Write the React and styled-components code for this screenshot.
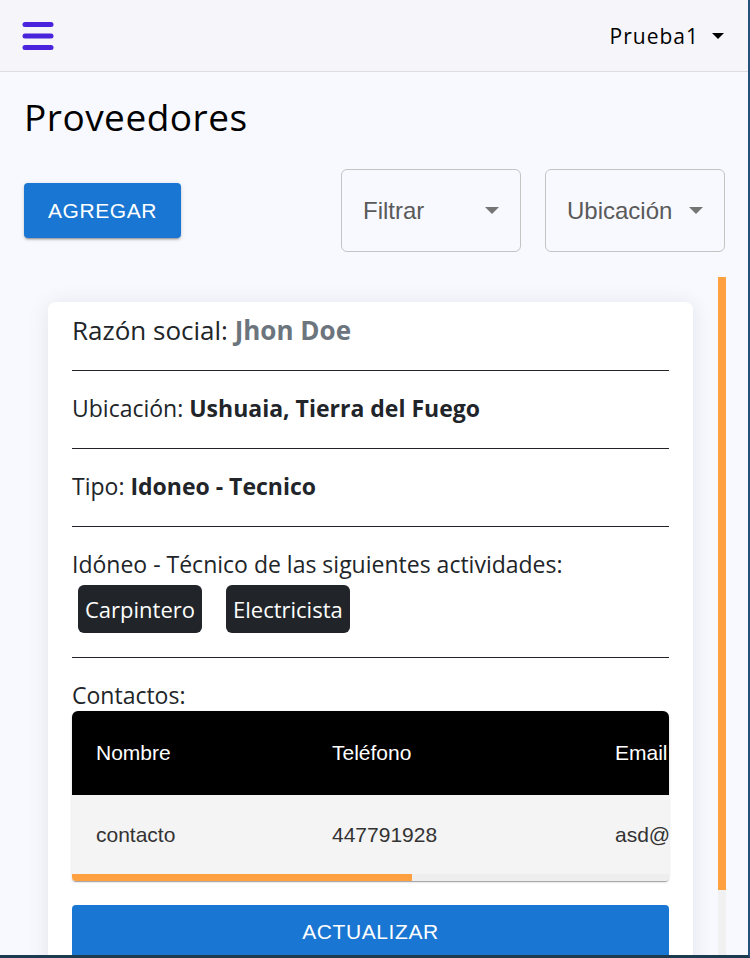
import React from 'react';
import styled, { createGlobalStyle } from 'styled-components';

const contactos = [
  { nombre: 'contacto', telefono: '447791928', email: 'asd@asd.com' }
];

const actividades = ['Carpintero', 'Electricista'];

const App = () => {
  return (
    <>
      <GlobalStyle />
      <Header>
        <MenuButton aria-label="menu">
          <svg width="32" height="30" viewBox="0 0 32 30">
            <g stroke="#4a23dc" strokeWidth="5" strokeLinecap="round">
              <line x1="3" y1="3.5" x2="29" y2="3.5" />
              <line x1="3" y1="15" x2="29" y2="15" />
              <line x1="3" y1="26.5" x2="29" y2="26.5" />
            </g>
          </svg>
        </MenuButton>
        <UserMenu>
          Prueba1
          <Caret />
        </UserMenu>
      </Header>

      <Main>
        <Title>Proveedores</Title>

        <Toolbar>
          <AddButton>Agregar</AddButton>
          <Selects>
            <SelectBox>
              <span>Filtrar</span>
              <SelectArrow />
            </SelectBox>
            <SelectBox>
              <span>Ubicación</span>
              <SelectArrow />
            </SelectBox>
          </Selects>
        </Toolbar>

        <ScrollArea>
          <ScrollContent>
            <Card>
              <Field $big>
                Razón social: <Muted>Jhon Doe</Muted>
              </Field>
              <Divider />
              <Field>
                Ubicación: <strong>Ushuaia, Tierra del Fuego</strong>
              </Field>
              <Divider />
              <Field>
                Tipo: <strong>Idoneo - Tecnico</strong>
              </Field>
              <Divider />
              <Field>Idóneo - Técnico de las siguientes actividades:</Field>
              <Badges>
                {actividades.map((a) => (
                  <Badge key={a}>{a}</Badge>
                ))}
              </Badges>
              <Divider />
              <Label>Contactos:</Label>
              <TablePaper>
                <TableClip>
                  <Table>
                    <thead>
                      <tr>
                        <Th $w={236}>Nombre</Th>
                        <Th $w={283}>Teléfono</Th>
                        <Th>Email</Th>
                      </tr>
                    </thead>
                    <tbody>
                      {contactos.map((c) => (
                        <tr key={c.telefono}>
                          <Td>{c.nombre}</Td>
                          <Td>{c.telefono}</Td>
                          <Td>{c.email}</Td>
                        </tr>
                      ))}
                    </tbody>
                  </Table>
                </TableClip>
                <HTrack>
                  <HThumb />
                </HTrack>
              </TablePaper>
              <UpdateButton>Actualizar</UpdateButton>
            </Card>
          </ScrollContent>
          <VTrack>
            <VThumb />
          </VTrack>
        </ScrollArea>
      </Main>

      <WindowFrame />
    </>
  );
};

const GlobalStyle = createGlobalStyle`
  * {
    box-sizing: border-box;
  }

  body {
    margin: 0;
    background: #f8f9fe;
    font-family: "Open Sans", "Noto Sans", sans-serif;
    color: #212529;
    overflow: hidden;
  }
`;

const Header = styled.header`
  height: 72px;
  display: flex;
  align-items: center;
  justify-content: space-between;
  padding: 0 26px 0 22px;
  background: #f6f5fa;
  border-bottom: 1px solid #dcdce2;
`;

const MenuButton = styled.button`
  display: flex;
  padding: 0;
  border: 0;
  background: none;
`;

const UserMenu = styled.div`
  display: flex;
  align-items: center;
  font-size: 21px;
  letter-spacing: 1px;
  color: #000;
`;

const Caret = styled.span`
  margin-left: 13px;
  border-top: 6px solid #000;
  border-left: 6px solid transparent;
  border-right: 6px solid transparent;
`;

const Main = styled.main`
  padding: 0 24px 0 24px;
`;

const Title = styled.h1`
  margin: 23px 0 0;
  font-size: 37px;
  font-weight: 400;
  line-height: 43px;
  letter-spacing: 0.5px;
  color: #000;
`;

const Toolbar = styled.div`
  display: flex;
  align-items: center;
  justify-content: space-between;
  margin-top: 31px;
`;

const AddButton = styled.button`
  width: 157px;
  height: 55px;
  border: 0;
  border-radius: 4px;
  background: #1976d2;
  color: #fff;
  font-family: "Liberation Sans", Arial, sans-serif;
  font-size: 21px;
  letter-spacing: 0.6px;
  text-transform: uppercase;
  box-shadow: 0 3px 1px -2px rgba(0, 0, 0, 0.2), 0 2px 2px rgba(0, 0, 0, 0.14),
    0 1px 5px rgba(0, 0, 0, 0.12);
`;

const Selects = styled.div`
  display: flex;
  gap: 24px;
  margin-right: 1px;
`;

const SelectBox = styled.div`
  width: 180px;
  height: 83px;
  display: flex;
  align-items: center;
  justify-content: space-between;
  padding: 0 21px 0 21px;
  border: 1px solid #c4c4c4;
  border-radius: 6px;
  font-family: "Liberation Sans", Arial, sans-serif;
  font-size: 24px;
  color: #5a5a5a;
`;

const SelectArrow = styled.span`
  border-top: 7px solid #757575;
  border-left: 7px solid transparent;
  border-right: 7px solid transparent;
`;

const ScrollArea = styled.div`
  height: 681px;
  margin-top: 25px;
  display: flex;
`;

const ScrollContent = styled.div`
  flex: 1;
  overflow: hidden;
  padding: 25px 25px 0 24px;
`;

const VTrack = styled.div`
  width: 8px;
  flex-shrink: 0;
  background: #f1f1f1;
`;

const VThumb = styled.div`
  height: 613px;
  background: #ffa041;
`;

const Card = styled.div`
  padding: 12px 24px 24px;
  background: #fff;
  border-radius: 8px;
  box-shadow: 0 2px 22px rgba(0, 0, 0, 0.09);
`;

const Field = styled.p`
  margin: 0;
  padding-bottom: 4px;
  font-size: ${(p) => (p.$big ? '26px' : '23px')};
  line-height: 32px;

  strong {
    font-weight: 700;
  }
`;

const Muted = styled.strong`
  color: #6c757d;
`;

const Divider = styled.hr`
  margin: 20px 0 21px;
  border: 0;
  border-top: 1px solid #212529;
`;

const Badges = styled.div`
  display: flex;
  gap: 24px;
  padding: 1px 0 4px 6px;
`;

const Badge = styled.span`
  height: 48px;
  display: flex;
  align-items: center;
  padding: 0 7px;
  border-radius: 6px;
  background: #212529;
  color: #fff;
  font-size: 22px;
`;

const Label = styled.div`
  font-size: 23px;
  line-height: 32px;
`;

const TablePaper = styled.div`
  border-radius: 6px 6px 4px 4px;
  overflow: hidden;
  background: #f4f4f4;
  box-shadow: 0 2px 1px -1px rgba(0, 0, 0, 0.2), 0 1px 1px rgba(0, 0, 0, 0.14),
    0 1px 3px rgba(0, 0, 0, 0.12);
`;

const TableClip = styled.div`
  overflow: hidden;
`;

const HTrack = styled.div`
  height: 7px;
  background: #eeeeee;
`;

const HThumb = styled.div`
  width: 57%;
  height: 100%;
  background: #ffa041;
`;

const Table = styled.table`
  width: 1051px;
  border-collapse: collapse;
  font-family: "Liberation Sans", Arial, sans-serif;
  font-size: 21px;
  text-align: left;
`;

const Th = styled.th`
  width: ${(p) => (p.$w ? `${p.$w}px` : 'auto')};
  height: 84px;
  padding: 0 24px;
  background: #000;
  color: #fff;
  font-weight: 400;
`;

const Td = styled.td`
  height: 79px;
  padding: 0 24px;
  color: #333;
`;

const UpdateButton = styled.button`
  width: 100%;
  height: 54px;
  margin-top: 24px;
  border: 0;
  border-radius: 4px;
  background: #1976d2;
  color: #fff;
  font-family: "Liberation Sans", Arial, sans-serif;
  font-size: 21px;
  letter-spacing: 0.6px;
  text-transform: uppercase;
`;

const WindowFrame = styled.div`
  position: fixed;
  inset: 0;
  pointer-events: none;
  border-right: 2px solid #24527a;
  border-bottom: 3px solid #1c3b4f;
`;

export default App;
